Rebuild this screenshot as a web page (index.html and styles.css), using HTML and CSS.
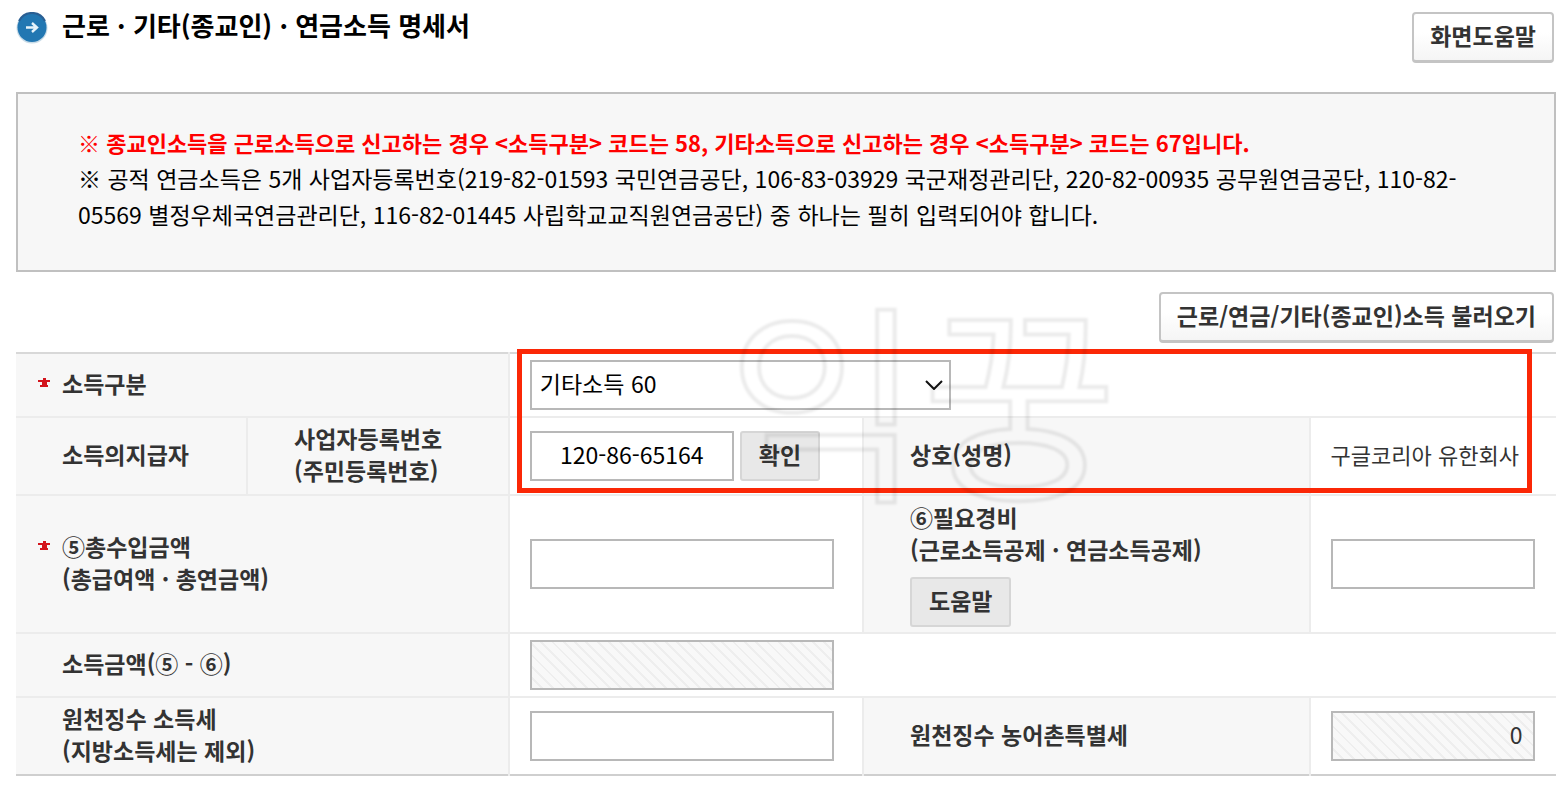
FILE: index.html
```html
<!DOCTYPE html>
<html lang="ko">
<head>
<meta charset="utf-8">
<meta name="viewport" content="width=device-width, initial-scale=1">
<title>근로 · 기타(종교인) · 연금소득 명세서</title>
<link rel="stylesheet" href="styles.css">
</head>
<body>
<main class="page">
  <header class="page-head">
    <svg class="head-icon" viewBox="0 0 32 32" aria-hidden="true">
      <circle cx="16" cy="16" r="15.5" fill="#c9dce8"/>
      <circle cx="16" cy="15.5" r="14.5" fill="#2277b2"/>
      <path d="M3 9a14.5 14.5 0 0 1 26 0" fill="none" stroke="#2a5f93" stroke-width="2"/>
      <path d="M10 15.5h10M16 11l5 4.5-5 4.5" fill="none" stroke="#e6f3fa" stroke-width="2.4"/>
    </svg>
    <h1 class="title">근로 · 기타(종교인) · 연금소득 명세서</h1>
    <button type="button" class="btn">화면도움말</button>
  </header>

  <section class="notice">
    <p class="notice-strong">※ 종교인소득을 근로소득으로 신고하는 경우 &lt;소득구분&gt; 코드는 58, 기타소득으로 신고하는 경우 &lt;소득구분&gt; 코드는 67입니다.</p>
    <p>※ 공적 연금소득은 5개 사업자등록번호(219-82-01593 국민연금공단, 106-83-03929 국군재정관리단, 220-82-00935 공무원연금공단, 110-82-<wbr>05569 별정우체국연금관리단, 116-82-01445 사립학교교직원연금공단) 중 하나는 필히 입력되어야 합니다.</p>
  </section>

  <div class="actions">
    <button type="button" class="btn">근로/연금/기타(종교인)소득 불러오기</button>
  </div>

  <div class="form-wrap">
    <table class="form">
      <colgroup>
        <col class="c1"><col class="c2"><col class="c3"><col class="c4"><col class="c5">
      </colgroup>
      <tbody>
        <tr class="short">
          <th scope="row" colspan="2">
            <div class="label">
              <svg class="star" viewBox="0 0 12 10" aria-hidden="true"><path d="M5 0h3v2h4v2H9v3h1v2H2V7h2V4H0V2h5z" fill="#d3141c"/></svg>
              <label for="kind">소득구분</label>
            </div>
          </th>
          <td colspan="3">
            <div class="select-box">
              <select id="kind" class="field"><option>기타소득 60</option></select>
              <svg class="chevron" viewBox="0 0 18 10" aria-hidden="true"><path d="M1 1l8 8 8-8" fill="none" stroke="#111" stroke-width="2"/></svg>
            </div>
          </td>
        </tr>
        <tr class="medium">
          <th scope="row"><div class="label">소득의지급자</div></th>
          <th scope="row"><div class="label"><label for="biz">사업자등록번호<br>(주민등록번호)</label></div></th>
          <td>
            <div class="inline">
              <input id="biz" class="field small centered" type="text" value="120-86-65164">
              <button type="button" class="btn-gray">확인</button>
            </div>
          </td>
          <th scope="row"><div class="label">상호(성명)</div></th>
          <td class="name">구글코리아 유한회사</td>
        </tr>
        <tr class="tall">
          <th scope="row" colspan="2">
            <div class="label">
              <svg class="star" viewBox="0 0 12 10" aria-hidden="true"><path d="M5 0h3v2h4v2H9v3h1v2H2V7h2V4H0V2h5z" fill="#d3141c"/></svg>
              <label for="total">⑤총수입금액<br>(총급여액 · 총연금액)</label>
            </div>
          </th>
          <td><input id="total" class="field" type="text"></td>
          <th scope="row">
            <div class="label stacked">
              <label for="cost">⑥필요경비<br>(근로소득공제 · 연금소득공제)</label>
              <button type="button" class="btn-gray">도움말</button>
            </div>
          </th>
          <td><input id="cost" class="field small" type="text"></td>
        </tr>
        <tr class="short">
          <th scope="row" colspan="2"><div class="label"><label for="net">소득금액(⑤ - ⑥)</label></div></th>
          <td colspan="3"><input id="net" class="field locked" type="text" readonly></td>
        </tr>
        <tr class="medium">
          <th scope="row" colspan="2"><div class="label"><label for="tax">원천징수 소득세<br>(지방소득세는 제외)</label></div></th>
          <td><input id="tax" class="field" type="text"></td>
          <th scope="row"><div class="label"><label for="rural">원천징수 농어촌특별세</label></div></th>
          <td><input id="rural" class="field small locked" type="text" value="0" readonly></td>
        </tr>
      </tbody>
    </table>
    <div class="highlight"></div>
    <div class="watermark" aria-hidden="true">익꿍</div>
  </div>
</main>
</body>
</html>
```
FILE: styles.css
```css
* {
  box-sizing: border-box;
}

body,
button,
input,
select {
  font-family: "Noto Sans CJK KR", sans-serif;
  font-size: 23px;
}

body {
  margin: 0;
  background: #fff;
  color: #333;
  line-height: 32px;
}

.page {
  padding: 12px 10px 16px 16px;
}

.page-head {
  display: flex;
  align-items: flex-start;
  padding-right: 2px;
}

.head-icon {
  flex: none;
  width: 32px;
  height: 32px;
}

.title {
  flex: 1;
  margin: 0 0 0 14px;
  color: #000;
  font-size: 26px;
  line-height: 26px;
}

.btn {
  height: 51px;
  padding: 0 16px 4px;
  border: 2px solid #c4c4c4;
  border-bottom-width: 3px;
  border-radius: 4px;
  background: linear-gradient(#fff 40%, #f5f5f5);
  color: #333;
  font-weight: 700;
  white-space: nowrap;
}

.notice {
  margin-top: 29px;
  padding: 30px 60px 38px;
  border: 2px solid #c0c0c0;
  background: #f7f7f7;
  color: #000;
  line-height: 36px;
  word-break: keep-all;
}

.notice p {
  margin: 0;
}

.notice .notice-strong {
  color: #f00;
  font-size: 22px;
  font-weight: 700;
}

.actions {
  display: flex;
  justify-content: flex-end;
  padding: 20px 2px 9px 0;
}

.form-wrap {
  position: relative;
}

.form {
  width: 100%;
  border-collapse: collapse;
  border-top: 2px solid #d8d8d8;
  border-bottom: 2px solid #cfcfcf;
  table-layout: fixed;
}

.c1 { width: 15%; }
.c2 { width: 17%; }
.c3 { width: 23%; }
.c4 { width: 29%; }
.c5 { width: 16%; }

.form th,
.form td {
  padding: 0;
  border-bottom: 2px solid #ececec;
  text-align: left;
  vertical-align: middle;
}

.form tr:last-child > * {
  border-bottom: 0;
}

.form th {
  border-right: 2px solid #ececec;
  background: #f7f7f7;
}

.form td + th {
  border-left: 2px solid #ececec;
}

.form td {
  padding-left: 20px;
}

.short { height: 64px; }
.medium { height: 78px; }
.tall { height: 138px; }

.label {
  position: relative;
  padding: 0 0 4px 46px;
}

.stacked {
  display: flex;
  flex-direction: column;
  align-items: flex-start;
  gap: 12px;
  padding-bottom: 0;
}

.star {
  position: absolute;
  top: 11px;
  left: 22px;
  width: 12px;
  height: 10px;
}

.inline {
  display: flex;
  gap: 6px;
}

.field {
  display: block;
  width: 304px;
  height: 50px;
  margin: 0;
  padding: 0 10px 4px;
  border: 2px solid #b8b8b8;
  border-radius: 0;
  background: #fff;
  color: #000;
}

.small {
  width: 204px;
}

.centered {
  text-align: center;
}

.locked {
  background: repeating-linear-gradient(45deg, #f8f8f8 0 6px, #eee 6px 8px);
  color: #333;
  text-align: right;
}

.select-box {
  position: relative;
  width: 421px;
}

.select-box .field {
  width: 100%;
  padding: 0 8px 4px;
  appearance: none;
}

.chevron {
  position: absolute;
  top: 20px;
  right: 8px;
  width: 18px;
  height: 10px;
  pointer-events: none;
}

.btn-gray {
  height: 50px;
  padding: 0 17px 4px;
  border: 2px solid #d6d6d6;
  border-radius: 3px;
  background: #e8e8e8;
  color: #333;
  font-weight: 700;
}

.form .name {
  padding-bottom: 4px;
  font-size: 22px;
  white-space: nowrap;
}

.highlight {
  position: absolute;
  top: -3px;
  right: 24px;
  left: 501px;
  height: 144px;
  border: 5px solid #fb2706;
  pointer-events: none;
}

.watermark {
  position: absolute;
  top: -68px;
  left: 711px;
  color: transparent;
  font-size: 212px;
  line-height: 220px;
  pointer-events: none;
  filter: blur(1px);
  -webkit-text-stroke: 4px rgba(0, 0, 0, 0.08);
}
```
